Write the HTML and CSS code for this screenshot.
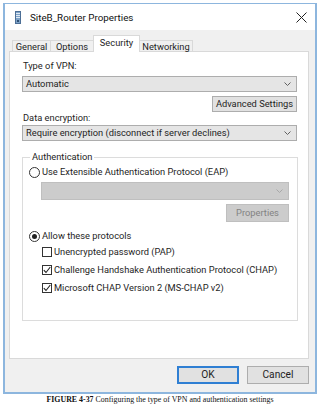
FILE: index.html
```html
<!DOCTYPE html>
<html>
<head>
<meta charset="utf-8">
<link rel="stylesheet" href="styles.css">
</head>
<body>
<div class="window">
  <div class="titlebar">
    <svg class="appicon" width="6" height="13" viewBox="0 0 6 13">
      <rect x="0.5" y="0.5" width="5" height="12" fill="#7fa3c8" stroke="#4d6f96"/>
      <rect x="1" y="2" width="4" height="1" fill="#dfe9f3"/>
      <rect x="1" y="4" width="4" height="1" fill="#dfe9f3"/>
      <rect x="1" y="6" width="4" height="1" fill="#dfe9f3"/>
      <rect x="2" y="9" width="2" height="2" fill="#2f4f73"/>
    </svg>
    <span class="title">SiteB_Router Properties</span>
    <svg class="close" width="11" height="11" viewBox="0 0 11 11">
      <path d="M0.5 0.5 L10.5 10.5 M10.5 0.5 L0.5 10.5" stroke="#222" stroke-width="1"/>
    </svg>
  </div>
  <div class="body">
    <div class="tabs">
      <div class="tab t-general">General</div>
      <div class="tab t-options">Options</div>
      <div class="tab t-security active">Security</div>
      <div class="tab t-networking">Networking</div>
    </div>
    <div class="panel">
      <div class="label">Type of VPN:</div>
      <div class="combo"><span>Automatic</span><svg class="chev" width="7" height="4" viewBox="0 0 7 4"><path d="M0.5 0.5 L3.5 3.5 L6.5 0.5" fill="none" stroke="#606060"/></svg></div>
      <div class="btnrow"><div class="btn adv">Advanced Settings</div></div>
      <div class="label">Data encryption:</div>
      <div class="combo combo2"><span>Require encryption (disconnect if server declines)</span><svg class="chev" width="7" height="4" viewBox="0 0 7 4"><path d="M0.5 0.5 L3.5 3.5 L6.5 0.5" fill="none" stroke="#606060"/></svg></div>
      <fieldset class="group">
        <legend>Authentication</legend>
        <div class="opt radio-row">
          <span class="radio"></span><span>Use Extensible Authentication Protocol (EAP)</span>
        </div>
        <div class="combo disabled"><span></span><svg class="chev" width="7" height="4" viewBox="0 0 7 4"><path d="M0.5 0.5 L3.5 3.5 L6.5 0.5" fill="none" stroke="#a8a8a8"/></svg></div>
        <div class="btnrow inner"><div class="btn props">Properties</div></div>
        <div class="opt radio-row allow">
          <span class="radio on"></span><span>Allow these protocols</span>
        </div>
        <div class="opt check-row first">
          <span class="check"></span><span>Unencrypted password (PAP)</span>
        </div>
        <div class="opt check-row">
          <span class="check on"><svg width="8" height="8" viewBox="0 0 8 8"><path d="M0.8 4.2 L3 6.5 L7.3 1" fill="none" stroke="#222" stroke-width="1.1"/></svg></span><span>Challenge Handshake Authentication Protocol (CHAP)</span>
        </div>
        <div class="opt check-row">
          <span class="check on"><svg width="8" height="8" viewBox="0 0 8 8"><path d="M0.8 4.2 L3 6.5 L7.3 1" fill="none" stroke="#222" stroke-width="1.1"/></svg></span><span>Microsoft CHAP Version 2 (MS-CHAP v2)</span>
        </div>
      </fieldset>
    </div>
    <div class="footer">
      <div class="btn dlg ok">OK</div>
      <div class="btn dlg">Cancel</div>
    </div>
  </div>
</div>
<div class="caption"><b>FIGURE 4-37</b> Configuring the type of VPN and authentication settings</div>
</body>
</html>
```

FILE: styles.css
```css
* { box-sizing: border-box; }
html, body { margin: 0; padding: 0; background: #fff; }
body {
  font-family: Roboto, "Liberation Sans", sans-serif;
  font-size: 9.3px;
  color: #1e1e1e;
  width: 320px;
  height: 414px;
  overflow: hidden;
  white-space: nowrap;
}
.window {
  margin: 3px 0 0 3px;
  width: 314px;
  height: 391px;
  border: 2px solid #8db6de;
  border-top-width: 1px;
  background: #fff;
  display: flex;
  flex-direction: column;
}
.titlebar {
  height: 26px;
  flex: none;
  display: flex;
  align-items: center;
  padding-left: 10px;
  padding-right: 8px;
  background: #fff;
}
.appicon { display: block; margin-top: 1px; }
.title {
  margin-left: 9px;
  font-size: 9.8px;
  color: #111;
  flex: 1;
}
.close { display: block; }
.body {
  flex: 1;
  background: #f0f0f0;
  padding: 5px 6px 0 4px;
}
.tabs {
  display: flex;
  height: 16px;
  padding-left: 3px;
  align-items: flex-end;
  position: relative;
  z-index: 1;
}
.tab {
  height: 11px;
  border: 1px solid #d9d9d9;
  border-bottom: none;
  background: #f0f0f0;
  line-height: 11px;
  text-align: center;
  margin-right: -1px;
}
.t-general { width: 39px; }
.t-options { width: 44px; }
.t-security { width: 47px; }
.t-networking { width: 54px; }
.tab.active {
  height: 17px;
  background: #fff;
  line-height: 14px;
  margin-bottom: -1px;
}
.panel {
  height: 308px;
  background: #fff;
  border: 1px solid #d9d9d9;
  padding: 8px 11px 0 12px;
}
.label { line-height: 12px; height: 12px; padding-left: 1px; }
.combo {
  margin-top: 4px;
  height: 16px;
  background: #e5e5e5;
  border: 1px solid #adadad;
  display: flex;
  align-items: center;
  justify-content: space-between;
  padding: 0 5px 0 3px;
  line-height: 12px;
}
.combo2 { margin-top: 1px; }
.chev { display: block; flex: none; }
.btnrow { display: flex; justify-content: flex-end; margin-top: 4px; }
.btn {
  background: #e1e1e1;
  border: 1px solid #adadad;
  text-align: center;
}
.adv { width: 85px; height: 16px; line-height: 14px; }
.group {
  margin: 10px 0 0 0;
  width: 276px;
  border: 1px solid #dcdcdc;
  padding: 0 8px 25px 6px;
  min-width: 0;
}
.group legend {
  padding: 0 2px;
  margin-left: 1px;
  line-height: 12px;
}
.opt {
  display: flex;
  align-items: center;
  height: 14px;
  line-height: 12px;
}
.radio-row { margin-top: 2px; }
.radio {
  width: 11px;
  height: 11px;
  border: 1px solid #333;
  border-radius: 50%;
  margin-right: 2px;
  flex: none;
  display: flex;
  align-items: center;
  justify-content: center;
}
.radio.on::after {
  content: "";
  width: 5px;
  height: 5px;
  border-radius: 50%;
  background: #222;
}
.combo.disabled {
  margin: 3px 0 0 12px;
  height: 18px;
  background: #cccccc;
  border-color: #bfbfbf;
}
.btnrow.inner { margin-top: 4px; }
.props {
  width: 63px;
  height: 18px;
  line-height: 16px;
  background: #cccccc;
  border-color: #bfbfbf;
  color: #838383;
}
.allow { margin-top: 7px; }
.check-row { margin-top: 4px; padding-left: 13px; }
.check-row.first { margin-top: 2px; }
.check {
  width: 10px;
  height: 10px;
  border: 1px solid #333;
  background: #fff;
  margin-right: 2px;
  flex: none;
  display: flex;
  align-items: center;
  justify-content: center;
}
.check svg { display: block; }
.footer {
  display: flex;
  justify-content: flex-end;
  gap: 8px;
  margin-top: 7px;
}
.dlg {
  width: 62px;
  height: 18px;
  line-height: 16px;
  font-size: 10.2px;
}
.ok { border: 2px solid #2f7fd3; line-height: 14px; }
.caption {
  margin-top: 1px;
  text-align: center;
  font-family: "Liberation Serif", serif;
  font-size: 7.9px;
  line-height: 10px;
  color: #111;
}
.caption b { font-weight: bold; }
```
